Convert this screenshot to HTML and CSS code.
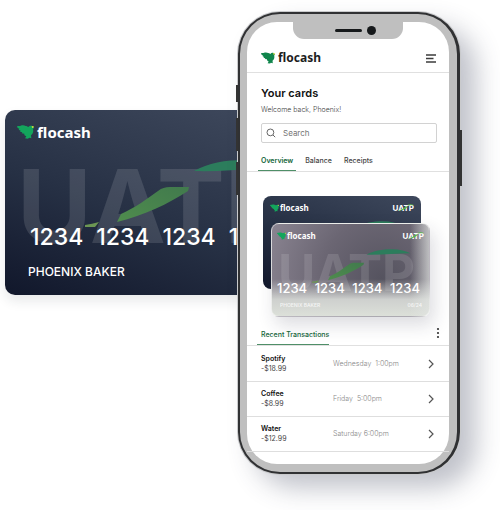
FILE: index.html
```html
<!DOCTYPE html>
<html lang="en">
<head>
<meta charset="utf-8">
<meta name="viewport" content="width=device-width, initial-scale=1">
<title>Flocash cards</title>
<link rel="stylesheet" href="styles.css">
</head>
<body>
<svg class="defs" aria-hidden="true">
  <defs>
    <linearGradient id="leaf" x1="0" y1="1" x2="1" y2="0">
      <stop offset="0" stop-color="#4f8c4d"/>
      <stop offset="1" stop-color="#417a4d"/>
    </linearGradient>
  </defs>
  <symbol id="bird" viewBox="0 0 51 42">
    <path fill="currentColor" d="M0 4C4 2 8 3 11 2C16 0 22 0 26 3C29 3 31 5 34 6C37 2 42 1 46 3L51 8L48 12C50 20 48 26 42 31L43 40L36 38L33 41L24 40L28 34C23 32 21 29 22 26L14 25L16 22L9 20L11 17L5 14L7 11L2 9Z"/>
    <path fill="#d8e23c" d="M44 4L50 3L49 9L45 8Z"/>
  </symbol>
  <symbol id="art" viewBox="0 0 316 185">
    <text class="watermark" x="12" y="133">UATP</text>
    <path fill="#6c9653" d="M80 115Q87 114 94 112L90 117L80 117Z"/>
    <path fill="url(#leaf)" d="M116 104C130 98 143 88 153 81C157 78 160 77 165 77L184 77L183 81C163 94 140 105 112 112Z"/>
    <path fill="#2c7d5c" d="M189 61C203 53 220 50 240 50C255 50 268 54 277 58C248 58 218 62 189 61Z"/>
  </symbol>
  <symbol id="chevron" viewBox="0 0 6 10">
    <path d="M1 1L5 5L1 9" fill="none" stroke="#555" stroke-width="1.2"/>
  </symbol>
</svg>

<main class="scene">
  <section class="card card-large" aria-label="Payment card">
    <svg class="card-art"><use href="#art"/></svg>
    <div class="brand"><svg class="bird"><use href="#bird"/></svg><span>flocash</span></div>
    <div class="number"><span>1234</span><span>1234</span><span>1234</span><span>1234</span></div>
    <div class="holder"><span>PHOENIX BAKER</span></div>
  </section>

  <section class="phone">
    <i class="key key-mute"></i><i class="key key-up"></i><i class="key key-down"></i><i class="key key-power"></i>
    <div class="screen">
      <div class="notch"><i class="speaker"></i><i class="camera"></i></div>
      <header class="topbar">
        <a class="brand brand-dark" href="#"><svg class="bird"><use href="#bird"/></svg><span>flocash</span></a>
        <button class="icon-button" type="button" aria-label="Menu">
          <svg width="10" height="9" viewBox="0 0 10 9"><path d="M0 1H10M0 4.5H7.5M0 8H10" stroke="#3c3c3c" stroke-width="1.3"/></svg>
        </button>
      </header>

      <div class="intro">
        <h1>Your cards</h1>
        <p>Welcome back, Phoenix!</p>
        <label class="search">
          <svg width="10" height="10" viewBox="0 0 10 10"><circle cx="4.4" cy="4.4" r="3.4" fill="none" stroke="#666"/><path d="M7 7L9.2 9.2" stroke="#666"/></svg>
          <input type="search" placeholder="Search" aria-label="Search">
        </label>
      </div>

      <nav class="tabs">
        <a class="tab tab-active" href="#">Overview</a>
        <a class="tab" href="#">Balance</a>
        <a class="tab" href="#">Receipts</a>
      </nav>

      <div class="stack">
        <div class="card card-small card-back">
          <svg class="card-art"><use href="#art"/></svg>
          <div class="card-top">
            <div class="brand"><svg class="bird"><use href="#bird"/></svg><span>flocash</span></div>
            <div class="network"><span>UATP</span><svg viewBox="0 0 20 9"><path d="M4 7Q9 6 12 3L14 3Q10 7 4 7ZM13 2Q16 0 20 2Z" fill="#55b948"/></svg></div>
          </div>
        </div>
        <div class="card card-small card-front">
          <svg class="card-art"><use href="#art"/></svg>
          <div class="card-top">
            <div class="brand"><svg class="bird"><use href="#bird"/></svg><span>flocash</span></div>
            <div class="network"><span>UATP</span><svg viewBox="0 0 20 9"><path d="M4 7Q9 6 12 3L14 3Q10 7 4 7ZM13 2Q16 0 20 2Z" fill="#55b948"/></svg></div>
          </div>
          <div class="number"><span>1234</span><span>1234</span><span>1234</span><span>1234</span></div>
          <div class="holder"><span>PHOENIX BAKER</span><span>06/24</span></div>
        </div>
      </div>

      <div class="recent">
        <h2>Recent Transactions</h2>
        <button class="icon-button" type="button" aria-label="More">
          <svg width="4" height="12" viewBox="0 0 4 12"><g fill="#333"><circle cx="2" cy="2" r="1.1"/><circle cx="2" cy="6" r="1.1"/><circle cx="2" cy="10" r="1.1"/></g></svg>
        </button>
      </div>
      <ul class="transactions">
        <li><div><strong>Spotify</strong><span>-$18.99</span></div><time>Wednesday&nbsp; 1:00pm</time><svg class="chevron"><use href="#chevron"/></svg></li>
        <li><div><strong>Coffee</strong><span>-$8.99</span></div><time>Friday&nbsp; 5:00pm</time><svg class="chevron"><use href="#chevron"/></svg></li>
        <li><div><strong>Water</strong><span>-$12.99</span></div><time>Saturday 6:00pm</time><svg class="chevron"><use href="#chevron"/></svg></li>
      </ul>
    </div>
  </section>
</main>
</body>
</html>
```
FILE: styles.css
```css
* { box-sizing: border-box; }
body { margin: 0; background: #fff; color: #111; font-family: Inter, "Liberation Sans", sans-serif; overflow-x: hidden; }
h1, h2, p, ul { margin: 0; padding: 0; }
a { color: inherit; text-decoration: none; }
svg { display: block; flex: none; }
.defs { position: absolute; width: 0; height: 0; }

.scene { display: flex; align-items: flex-start; padding: 12px 40px 36px 5px; }

/* Cards */
.card { position: relative; overflow: hidden; color: #fff; background: linear-gradient(20deg, #11172b 0%, #263044 45%, #3e485c 100%); }
.card-large { flex: 1; min-width: 0; height: 185px; margin: 98px -20px 0 0; padding: 14px 12px; border-radius: 10px; box-shadow: 0 6px 12px rgba(30, 35, 50, .1); }
.card-art { position: absolute; top: 0; left: 0; }
.card-large .card-art { width: 316px; height: 185px; }
.card-small .card-art { width: 158px; height: 93px; }
.watermark { font: 700 102px Inter, sans-serif; fill: #fff; fill-opacity: .12; }
.brand { position: relative; display: flex; align-items: center; gap: 3px; font-family: "Noto Sans", sans-serif; font-weight: 700; }
.brand .bird { color: #13a55c; }
.card-large .brand { font-size: 15px; line-height: 16px; }
.card-large .bird { width: 17px; height: 14px; }
.number { position: relative; display: flex; font-weight: 500; }
.card-large .number { gap: 13px; margin: 85px 0 0 13px; font-size: 23px; line-height: 24px; }
.holder { position: relative; display: flex; justify-content: space-between; }
.card-large .holder { margin: 15px 0 0 11px; font-size: 12px; line-height: 16px; font-weight: 500; }

/* Phone shell */
.phone { position: relative; flex: none; width: 222px; padding: 8px 8px 8px 7px; background: #bfbfbf; border: 2px solid #303133; border-right-width: 3px; border-radius: 42px; box-shadow: 0 0 0 1px #c9cacc, 16px 14px 26px rgba(60, 65, 90, .32); }
.key { position: absolute; width: 2px; background: #333; left: -4px; }
.key-mute { top: 71px; height: 17px; }
.key-up { top: 104px; height: 33px; }
.key-down { top: 148px; height: 33px; }
.key-power { top: 116px; height: 56px; left: auto; right: -5px; }
.screen { position: relative; padding-bottom: 12px; background: #fff; border-radius: 30px; }
.notch { position: absolute; top: -1px; left: 50%; width: 110px; height: 18px; margin-left: -55px; padding-left: 15px; display: flex; align-items: center; justify-content: center; gap: 5px; background: #bfbfbf; border-radius: 0 0 11px 11px; }
.speaker { width: 27px; height: 3px; background: #16191b; border-radius: 2px; }
.camera { width: 9px; height: 9px; background: #16191b; border-radius: 50%; }

/* Screen content */
.icon-button { display: flex; margin: 0; padding: 0; border: 0; background: none; }
.topbar { display: flex; align-items: center; justify-content: space-between; padding: 28px 13px 6px 14px; border-bottom: 1px solid #e0e0e0; }
.brand-dark { font-size: 12px; line-height: 16px; font-weight: 700; color: #1d1d1d; }
.brand-dark .bird { width: 14px; height: 12px; color: #10854c; }
.intro { padding: 12px 12px 0 14px; }
h1 { font-size: 11px; line-height: 16px; font-weight: 600; }
.intro p { margin-top: 4px; font-size: 7px; line-height: 10px; font-weight: 300; color: #444; }
.search { display: flex; align-items: center; gap: 7px; height: 20px; margin-top: 8px; padding: 0 4px; border: 1px solid #d2d2d2; border-radius: 2px; }
.search input { flex: 1; min-width: 0; padding: 0; border: 0; outline: 0; background: none; font: 8px Inter, sans-serif; }
.search input::placeholder { color: #757575; }
.tabs { display: flex; gap: 6px; margin-top: 11px; padding: 0 11px; border-bottom: 1px solid #e0e0e0; }
.tab { padding: 2px 3px 4px; font-size: 7px; line-height: 10px; font-weight: 500; color: #444; border-bottom: 1px solid transparent; }
.tab-active { font-weight: 600; color: #14663a; border-color: #4f8f68; }

.stack { display: grid; margin: 24px 19px 0 16px; }
.card-small { grid-area: 1 / 1; height: 93px; padding: 7px; border-radius: 8px; }
.card-back { margin-right: 9px; }
.card-front { height: 94px; margin: 27px 0 0 8px; border: 1px solid rgba(255, 255, 255, .45);
  background: linear-gradient(90deg, transparent 88%, rgba(225, 228, 225, .7) 100%), linear-gradient(180deg, transparent 60%, #ced0ce 82%, #dce0d9 100%), radial-gradient(circle at 70% 60%, #55535f, #6b6673 50%, #8a8491 100%);
  box-shadow: 4px 8px 18px rgba(40, 40, 60, .16); }
.card-top { position: relative; display: flex; justify-content: space-between; align-items: center; }
.card-small .brand { gap: 1px; font-size: 8px; line-height: 10px; }
.card-small .bird { width: 9px; height: 8px; }
.network { position: relative; font-size: 8px; line-height: 10px; font-weight: 700; }
.network svg { position: absolute; inset: 0; width: 100%; height: 100%; }
.card-front { padding: 7px 5px; }
.card-small .number { justify-content: space-between; margin: 40px 4px 0 0; font-size: 13px; line-height: 14px; }
.card-small .holder { margin: 6px 2px 0 3px; font-size: 5px; line-height: 8px; font-weight: 500; opacity: .8; }

.recent { display: flex; align-items: flex-end; justify-content: space-between; margin-top: 10px; padding: 0 9px 0 10px; border-bottom: 1px solid #e0e0e0; }
.recent h2 { padding: 0 0 4px 4px; font-size: 7px; line-height: 10px; font-weight: 500; color: #14663a; border-bottom: 1px solid #4f8f68; }
.recent .icon-button { padding-bottom: 6px; }
.transactions { list-style: none; }
.transactions li { display: grid; grid-template-columns: 72px 1fr 6px; align-items: center; height: 35px; padding: 0 15px 0 14px; border-bottom: 1px solid #dedede; font-size: 7px; line-height: 10px; }
.transactions li:first-child { height: 36px; }
.transactions strong, .transactions span { display: block; }
.transactions strong { font-weight: 600; }
.transactions span { color: #444; }
.transactions time { color: #888; font-weight: 300; }
.chevron { width: 6px; height: 10px; }
```
